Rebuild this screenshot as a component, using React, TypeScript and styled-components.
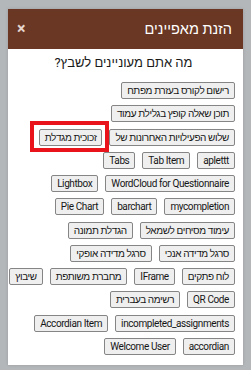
import styled, { createGlobalStyle } from "styled-components";

const OPTION_ROWS: string[][] = [
  ["רישום לקורס בעזרת מפתח"],
  ["תוכן שאלה קופץ בגלילת עמוד"],
  ["שלוש הפעילויות האחרונות של", "זכוכית מגדלת"],
  ["aplettt", "Tab Item", "Tabs"],
  ["WordCloud for Questionnaire", "Lightbox"],
  ["mycompletion", "barchart", "Pie Chart"],
  ["עימוד מסיחים לשמאל", "הגדלת תמונה"],
  ["סרגל מדידה אנכי", "סרגל מדידה אופקי"],
  ["לוח פתקים", "IFrame", "מחברת משותפת", "שיבוץ"],
  ["QR Code", "רשימה בעברית"],
  ["incompleted_assignments", "Accordian Item"],
  ["accordian", "Welcome User"],
];

const HIGHLIGHTED = "זכוכית מגדלת";

const App = () => {
  return (
    <>
      <GlobalStyle />
      <Page>
        <Modal>
          <Header>
            <Title>הזנת מאפיינים</Title>
            <CloseBtn aria-label="close">×</CloseBtn>
          </Header>
          <Body>
            <Question>מה אתם מעוניינים לשבץ?</Question>
            <Options>
              {OPTION_ROWS.map((row, i) => (
                <OptionRow key={i}>
                  {row.map((label) => (
                    <OptionBtn key={label} $highlighted={label === HIGHLIGHTED}>
                      {label}
                    </OptionBtn>
                  ))}
                </OptionRow>
              ))}
            </Options>
          </Body>
        </Modal>
      </Page>
    </>
  );
};
export default App;

const GlobalStyle = createGlobalStyle`
  html, body {
    margin: 0;
    padding: 0;
    background: #b4b7ba;
    font-family: Roboto, "Liberation Sans", sans-serif;
  }
`;

const Page = styled.div`
  width: 251px;
  height: 370px;
  padding: 9px 0 0 8px;
  box-sizing: border-box;
  overflow: hidden;
`;

const Modal = styled.div`
  width: 235px;
  height: 356px;
  background: #ffffff;
  box-shadow: 0 0 3px rgba(0, 0, 0, 0.15);
  display: flex;
  flex-direction: column;
`;

const Header = styled.div`
  height: 40px;
  flex-shrink: 0;
  background: #693723;
  direction: rtl;
  display: flex;
  align-items: center;
  justify-content: space-between;
  padding: 0 11px 0 9px;
`;

const Title = styled.h2`
  margin: 0;
  font-size: 14.5px;
  font-weight: 400;
  color: #ffffff;
`;

const CloseBtn = styled.button`
  border: none;
  background: none;
  padding: 0;
  color: #e6d6cf;
  font-family: Roboto, "Liberation Sans", sans-serif;
  font-size: 16px;
  font-weight: 700;
  line-height: 1;
  cursor: pointer;
`;

const Body = styled.div`
  direction: rtl;
  padding: 6px 8px 0 4px;
`;

const Question = styled.p`
  margin: 0 0 11px;
  text-align: center;
  font-size: 13px;
  line-height: 16px;
  color: #1a1a1a;
`;

const Options = styled.div`
  display: flex;
  flex-direction: column;
  gap: 6.25px;
`;

const OptionRow = styled.div`
  display: flex;
  gap: 7px;
`;

const OptionBtn = styled.button<{ $highlighted?: boolean }>`
  position: relative;
  height: 17px;
  padding: 0 5px;
  border: 1px solid #858585;
  border-radius: 2px;
  background: #efefef;
  color: #161616;
  font-family: Roboto, "Liberation Sans", sans-serif;
  font-size: 10px;
  letter-spacing: -0.4px;
  line-height: 15px;
  white-space: nowrap;

  &::after {
    content: "";
    display: ${(p) => (p.$highlighted ? "block" : "none")};
    position: absolute;
    top: -9px;
    bottom: -7px;
    left: -10px;
    right: -8px;
    border: 4px solid #e8131b;
    pointer-events: none;
  }
`;
